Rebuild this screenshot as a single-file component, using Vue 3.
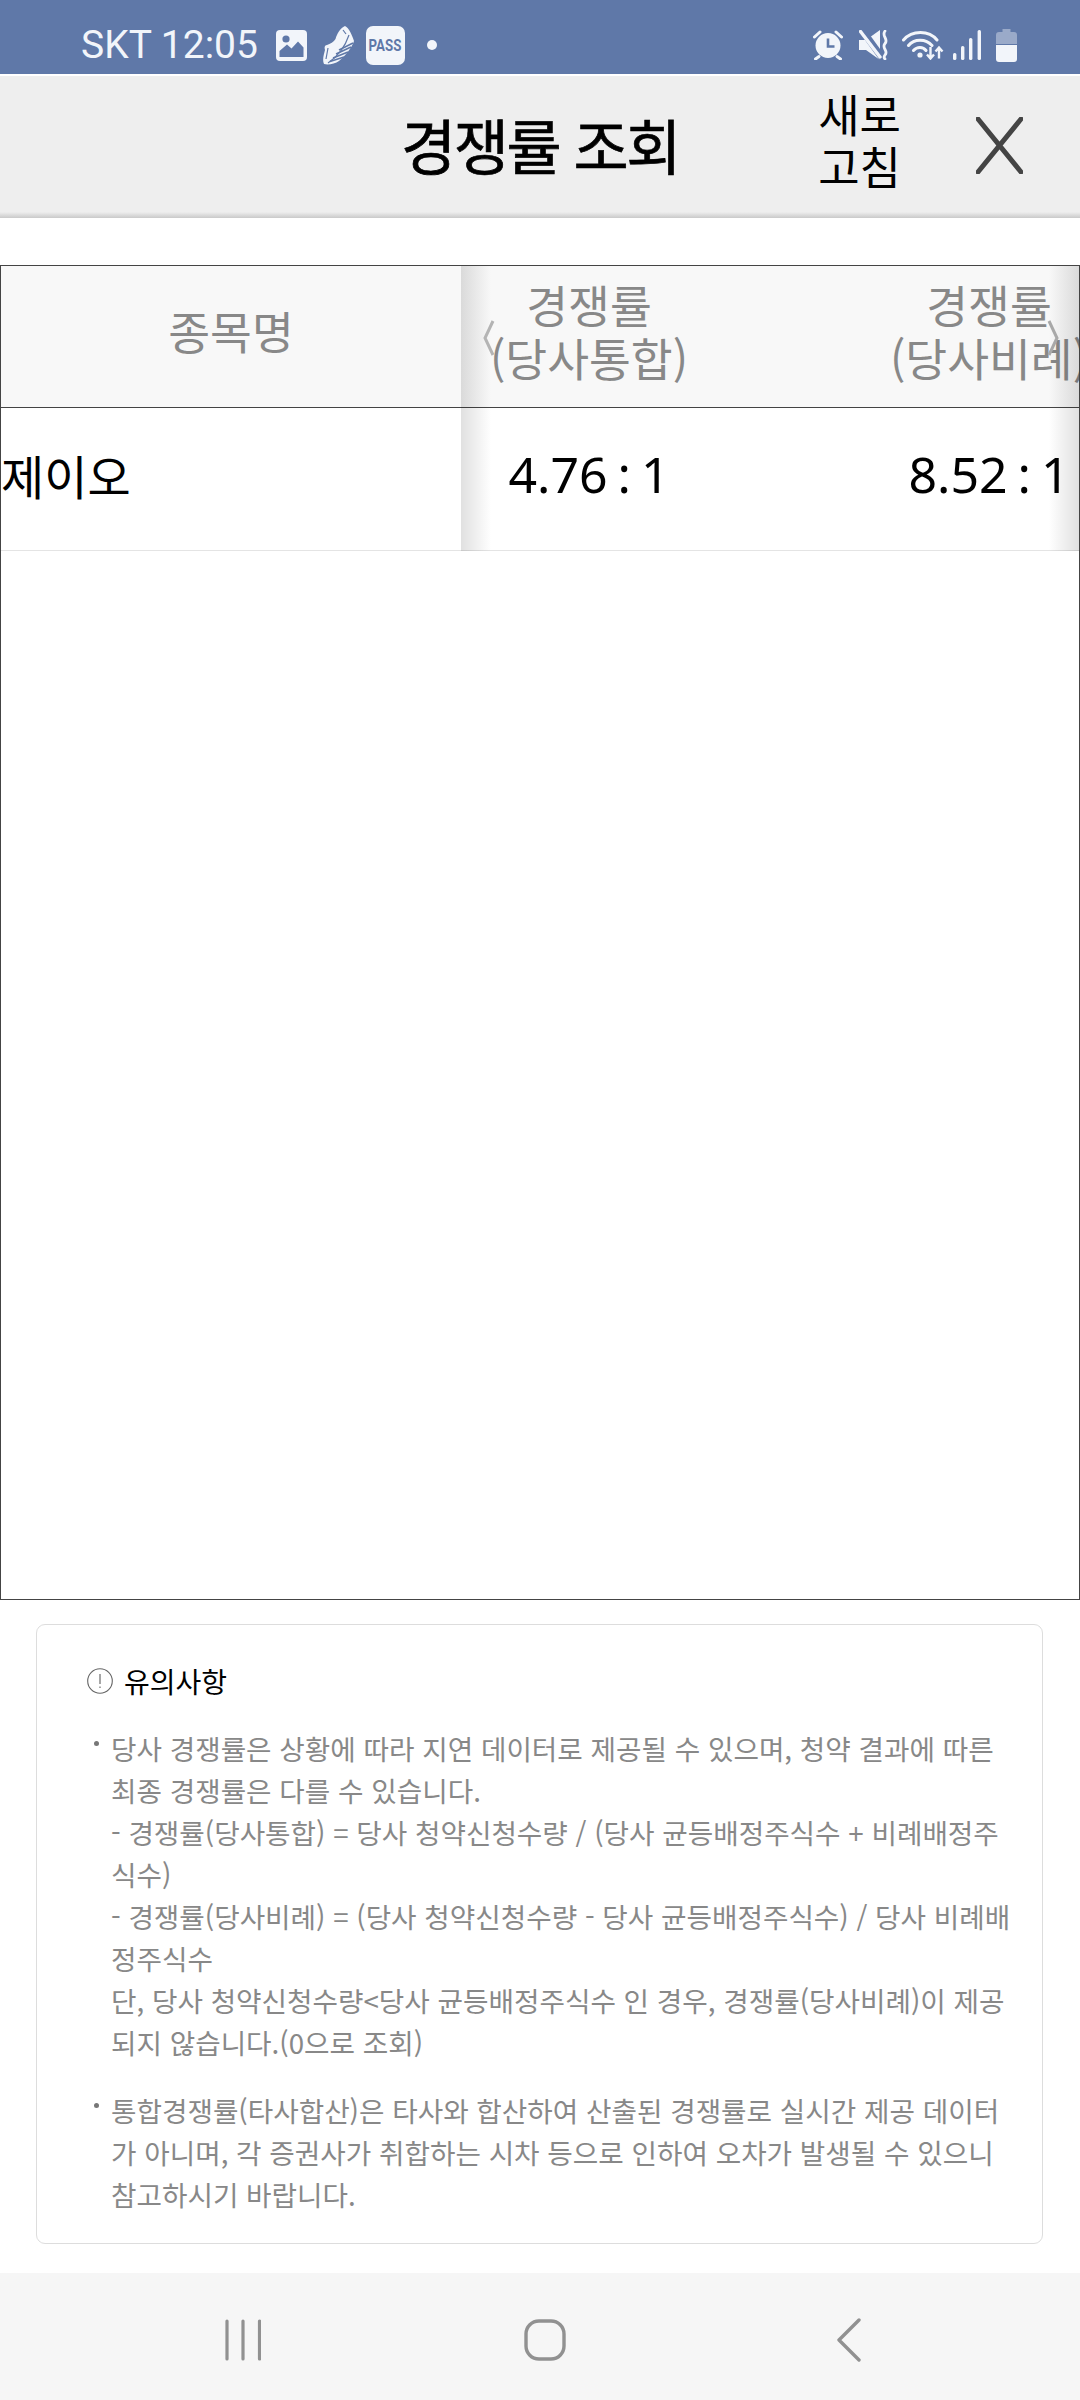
<script setup>
const rates = [
  { title: '(당사통합)', value: '4.76 : 1' },
  { title: '(당사비례)', value: '8.52 : 1' },
]

const notes = [
  [
    '당사 경쟁률은 상황에 따라 지연 데이터로 제공될 수 있으며, 청약 결과에 따른',
    '최종 경쟁률은 다를 수 있습니다.',
    '- 경쟁률(당사통합) = 당사 청약신청수량 / (당사 균등배정주식수 + 비례배정주',
    '식수)',
    '- 경쟁률(당사비례) = (당사 청약신청수량 - 당사 균등배정주식수) / 당사 비례배',
    '정주식수',
    '단, 당사 청약신청수량<당사 균등배정주식수 인 경우, 경쟁률(당사비례)이 제공',
    '되지 않습니다.(0으로 조회)',
  ],
  [
    '통합경쟁률(타사합산)은 타사와 합산하여 산출된 경쟁률로 실시간 제공 데이터',
    '가 아니며, 각 증권사가 취합하는 시차 등으로 인하여 오차가 발생될 수 있으니',
    '참고하시기 바랍니다.',
  ],
]
</script>

<template>
  <div class="screen" lang="ko">
    <div class="status">
      <div class="status-left">
        <span class="clock">SKT 12:05</span>
        <svg class="ic-image" width="31" height="31" viewBox="0 0 31 31">
          <rect width="31" height="31" rx="4" fill="#f2f5fa" />
          <circle cx="10" cy="9" r="3.6" fill="#5f78a8" />
          <path d="M3.5 21 L11 14.5 L15.5 18.5 L22 11.5 L27.5 17.5 V27 H3.5 Z" fill="#5f78a8" />
        </svg>
        <svg class="ic-shoe" width="31" height="39" viewBox="0 0 31 39">
          <path d="M22 0 C26 2 29 9 31 15 C29 22 21 31 16 35 C12 38 5 39 1 38 C-1 34 1 28 2 24 C1 21 2 19 4 19 C7 18 11 16 12.5 13 C14 8 17 2 22 0 Z" fill="#f2f5fa" />
          <path d="M16 24 L30 17 M13 28 L28 21 M10 32 L25 26 M7 35.500 L21 31" stroke="#5f78a8" stroke-width="1.6" fill="none" />
          <path d="M5 37 C14 31 22 21 26 9 M20 4 L23 8 M5 22 L3 33" stroke="#5f78a8" stroke-width="1.2" fill="none" />
        </svg>
        <span class="pass"><span class="pass-label">PASS</span></span>
        <span class="dot"></span>
      </div>
      <div class="status-right">
        <svg class="ic-alarm" width="30" height="30" viewBox="0 0 30 30">
          <circle cx="15" cy="15.5" r="12.5" fill="#f2f5fa" />
          <path d="M15 8.5 V16.5 H21.5" stroke="#5f78a8" stroke-width="2.6" fill="none" />
          <path d="M1.5 7 L7 2 M28.5 7 L23 2 M6 26.5 L2.5 29 M24 26.5 L27.5 29" stroke="#f2f5fa" stroke-width="3" stroke-linecap="round" fill="none" />
        </svg>
        <svg class="ic-mute" width="30" height="30" viewBox="0 0 30 30">
          <path d="M0 10 H7 L21 0 V30 L7 20 H0 Z" fill="#f2f5fa" />
          <path d="M3 0 L24 29" stroke="#5f78a8" stroke-width="7" />
          <path d="M1.5 1.5 L21 27" stroke="#f2f5fa" stroke-width="3.4" stroke-linecap="round" />
          <path d="M26 1 C22 6 30 9 26 13.5 C22 18 30 21 26 25 C24.5 27 25 28 26 29" stroke="#f2f5fa" stroke-width="2.8" stroke-linecap="round" fill="none" />
        </svg>
        <svg class="ic-wifi" width="42" height="30" viewBox="0 0 42 30">
          <path d="M1.5 10 C10 0 27 0 35 10 M6.5 15.5 C12 8.5 24 8.5 30 15.5 M11.5 20.5 C15 16.5 21 16.5 24 20.5" stroke="#f2f5fa" stroke-width="3" stroke-linecap="round" fill="none" />
          <circle cx="18" cy="25" r="2.6" fill="#f2f5fa" />
          <path d="M28.5 17 V28 M25 24.5 L28.5 28.5 L32 24.5 M37 28.5 V18 M33.5 21.5 L37 17.5 L40.5 21.5" stroke="#f2f5fa" stroke-width="2.4" fill="none" />
        </svg>
        <svg class="ic-signal" width="28" height="30" viewBox="0 0 28 30">
          <rect x="0" y="23" width="3.4" height="7" rx="1.5" fill="#f2f5fa" />
          <rect x="8" y="16" width="3.4" height="14" rx="1.5" fill="#f2f5fa" />
          <rect x="16" y="8" width="3.4" height="22" rx="1.5" fill="#f2f5fa" />
          <rect x="24.6" y="0" width="3.4" height="30" rx="1.5" fill="#f2f5fa" />
        </svg>
        <svg class="ic-battery" width="21" height="33" viewBox="0 0 21 33">
          <path d="M6.5 0 H14.5 V3 H18 Q21 3 21 6 V15 H0 V6 Q0 3 3 3 H6.5 Z" fill="#f2f5fa" opacity="0.4" />
          <path d="M0 16 H21 V30 Q21 33 18 33 H3 Q0 33 0 30 Z" fill="#f2f5fa" />
        </svg>
      </div>
    </div>

    <header class="topbar">
      <span></span>
      <h1 class="title">경쟁률 조회</h1>
      <div class="actions">
        <span class="refresh">새로<br />고침</span>
        <svg class="close" width="47" height="57" viewBox="0 0 47 57">
          <path d="M2 2 L45 55 M45 2 L2 55" stroke="#444" stroke-width="5" stroke-linecap="round" fill="none" />
        </svg>
      </div>
    </header>

    <section class="table">
      <div class="fixed-col">
        <div class="cell head">종목명</div>
        <div class="cell row name">제이오</div>
      </div>
      <div class="scroll-col">
        <div class="scroll-inner">
          <div v-for="rate in rates" :key="rate.title" class="rate-col">
            <div class="cell head">경쟁률<br />{{ rate.title }}</div>
            <div class="cell row value">{{ rate.value }}</div>
          </div>
        </div>
        <div class="fade fade-left"></div>
        <div class="fade fade-right"></div>
        <svg class="arrow arrow-left" width="12" height="36" viewBox="0 0 12 36">
          <path d="M10 1 L2 18 L10 35" stroke="#b4b4b4" stroke-width="3" fill="none" />
        </svg>
        <svg class="arrow arrow-right" width="12" height="36" viewBox="0 0 12 36">
          <path d="M2 1 L10 18 L2 35" stroke="#a8a8a8" stroke-width="3" fill="none" />
        </svg>
      </div>
    </section>

    <section class="notice">
      <div class="notice-title">
        <svg width="26" height="26" viewBox="0 0 26 26">
          <circle cx="13" cy="13" r="12.3" stroke="#666" stroke-width="1.1" fill="none" />
          <path d="M13 6 V16 M13 18.5 V20" stroke="#777" stroke-width="1.3" fill="none" />
        </svg>
        <span>유의사항</span>
      </div>
      <ul class="notes">
        <li v-for="(lines, i) in notes" :key="i">
          <div v-for="line in lines" :key="line">{{ line }}</div>
        </li>
      </ul>
    </section>

    <nav class="navbar">
      <svg width="36" height="42" viewBox="0 0 36 42">
        <path d="M2 2 V40 M18 2 V40 M34.5 2 V40" stroke="#919191" stroke-width="3.2" stroke-linecap="round" fill="none" />
      </svg>
      <svg width="42" height="42" viewBox="0 0 42 42">
        <rect x="2" y="2" width="38" height="38" rx="13" stroke="#919191" stroke-width="3.4" fill="none" />
      </svg>
      <svg width="24" height="44" viewBox="0 0 24 44">
        <path d="M22 2 L2 22 L22 42" stroke="#919191" stroke-width="3.4" stroke-linecap="round" stroke-linejoin="round" fill="none" />
      </svg>
    </nav>
  </div>
</template>

<style>
html,
body {
  margin: 0;
  background: #fff;
}
</style>

<style scoped>
.screen {
  width: 1080px;
  height: 2400px;
  display: flex;
  flex-direction: column;
  overflow: hidden;
  background: #fff;
  font-family: "Noto Sans CJK KR", "Noto Sans", sans-serif;
}

.status {
  flex: none;
  height: 74px;
  box-sizing: border-box;
  padding: 16px 63px 0 81px;
  margin-bottom: 2px;
  background: #5f78a8;
  display: flex;
  align-items: center;
  justify-content: space-between;
  color: #f2f5fa;
}

.status-left,
.status-right {
  display: flex;
  align-items: center;
}

.clock {
  font-family: Roboto, sans-serif;
  font-size: 39px;
  line-height: 44px;
  margin-right: 18px;
}

.ic-shoe {
  margin: 0 12px 0 16px;
}

.pass {
  width: 39px;
  height: 39px;
  border-radius: 7px;
  background: #f2f5fa;
  color: #5f78a8;
  display: flex;
  align-items: center;
  justify-content: center;
}

.pass-label {
  display: inline-block;
  font-family: Roboto, sans-serif;
  font-weight: 700;
  font-size: 17px;
  line-height: 20px;
  transform: scaleX(0.78);
}

.dot {
  width: 10px;
  height: 10px;
  border-radius: 50%;
  background: #f2f5fa;
  margin-left: 22px;
}

.ic-mute {
  margin-left: 16px;
}

.ic-wifi {
  margin-left: 13px;
}

.ic-signal {
  margin-left: 9px;
}

.ic-battery {
  margin-left: 15px;
}

.topbar {
  flex: none;
  height: 142px;
  box-sizing: border-box;
  display: grid;
  grid-template-columns: 1fr auto 1fr;
  align-items: center;
  background: linear-gradient(#eee calc(100% - 6px), #c9c9c9);
}

.title {
  margin: 0 0 6px;
  font-size: 60px;
  font-weight: 400;
  line-height: 70px;
  color: #000;
  letter-spacing: -2.5px;
  -webkit-text-stroke: 0.7px #000;
}

.actions {
  display: flex;
  justify-content: flex-end;
  align-items: center;
  padding-right: 57px;
  gap: 75px;
}

.refresh {
  font-size: 45px;
  line-height: 52px;
  color: #000;
  text-align: center;
  padding-bottom: 14px;
}

.close {
  margin-bottom: 4px;
}

.table {
  flex: 1;
  min-height: 0;
  margin: 47px 0 24px;
  box-sizing: border-box;
  border: 1px solid #444;
  display: grid;
  grid-template-columns: 460px 1fr;
  align-items: start;
}

.cell {
  box-sizing: border-box;
  display: flex;
  align-items: center;
  justify-content: center;
  text-align: center;
}

.head {
  height: 142px;
  background: #f8f8f8;
  border-bottom: 1px solid #444;
  color: #888;
  font-size: 45.5px;
  line-height: 53px;
  padding-bottom: 12px;
}

.row {
  height: 143px;
  border-bottom: 1px solid #e4e4e4;
  color: #000;
  font-size: 47px;
  padding-bottom: 10px;
}

.name {
  justify-content: flex-start;
}

.value {
  font-family: "Noto Sans", sans-serif;
  font-size: 50px;
  word-spacing: -3px;
  white-space: pre;
}

.scroll-col {
  position: relative;
  overflow: hidden;
}

.scroll-inner {
  display: flex;
  margin-left: -72px;
}

.rate-col {
  flex: none;
  width: 400px;
}

.rate-col .head {
  white-space: nowrap;
  flex-wrap: wrap;
}

.fade {
  position: absolute;
  top: 0;
  bottom: 0;
  width: 30px;
}

.fade-left {
  left: 0;
  background: linear-gradient(90deg, rgba(0, 0, 0, 0.12), rgba(0, 0, 0, 0));
}

.fade-right {
  right: 0;
  background: linear-gradient(270deg, rgba(0, 0, 0, 0.12), rgba(0, 0, 0, 0));
}

.arrow {
  position: absolute;
  top: 54px;
}

.arrow-left {
  left: 22px;
}

.arrow-right {
  right: 20px;
}

.notice {
  flex: none;
  box-sizing: border-box;
  margin: 0 37px 29px 36px;
  padding: 38px 24px 28px 50px;
  border: 1.5px solid #ddd;
  border-radius: 9px;
}

.notice-title {
  display: flex;
  align-items: center;
  gap: 11px;
  font-size: 28px;
  line-height: 36px;
  color: #000;
  margin-bottom: 28px;
}

.notes {
  list-style: none;
  margin: 0;
  padding: 0 0 0 24px;
  font-size: 27.7px;
  line-height: 42px;
  color: #888;
  white-space: nowrap;
}

.notes li {
  position: relative;
}

.notes li + li {
  margin-top: 26px;
}

.notes li::before {
  content: "";
  position: absolute;
  left: -17px;
  top: 14px;
  width: 5px;
  height: 5px;
  border-radius: 50%;
  background: #777;
}

.navbar {
  flex: none;
  height: 127px;
  box-sizing: border-box;
  background: #f6f6f6;
  display: flex;
  align-items: center;
  padding: 7px 0 0 225px;
}

.navbar svg:nth-child(2) {
  margin-left: 263px;
}

.navbar svg:nth-child(3) {
  margin-left: 271px;
}
</style>
